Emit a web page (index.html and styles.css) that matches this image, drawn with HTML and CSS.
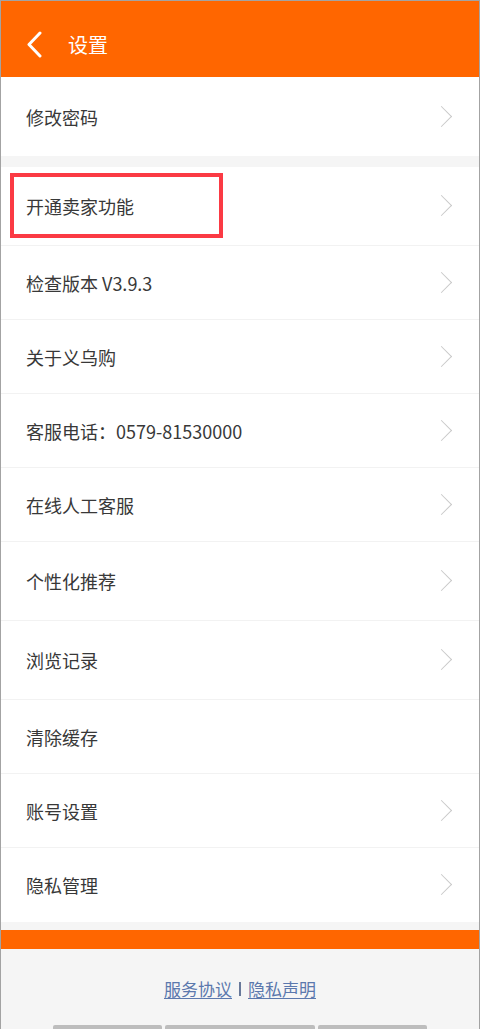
FILE: index.html
```html
<!DOCTYPE html>
<html lang="zh-CN">
<head>
  <meta charset="UTF-8">
  <title>设置</title>
  <link rel="stylesheet" href="styles.css">
</head>
<body>

<div class="screen">
  <div class="header">
    <svg class="back" width="16" height="27" viewBox="0 0 16 27">
      <path d="M14 2 L3 13.5 L14 25" fill="none" stroke="#fff" stroke-width="3" stroke-linecap="round" stroke-linejoin="round"/>
    </svg>
    <span class="title">设置</span>
  </div>

  <div class="group">
    <div class="row first">修改密码<span class="arrow"></span></div>
  </div>

  <div class="group">
    <div class="row tall highlight">开通卖家功能<span class="arrow"></span><span class="mark"></span></div>
    <div class="row">检查版本 V3.9.3<span class="arrow"></span></div>
    <div class="row">关于义乌购<span class="arrow"></span></div>
    <div class="row">客服电话：0579-81530000<span class="arrow"></span></div>
    <div class="row">在线人工客服<span class="arrow"></span></div>
    <div class="row tall">个性化推荐<span class="arrow"></span></div>
    <div class="row tall">浏览记录<span class="arrow"></span></div>
    <div class="row">清除缓存</div>
    <div class="row">账号设置<span class="arrow"></span></div>
    <div class="row last">隐私管理<span class="arrow"></span></div>
  </div>

  <div class="orange-bar"></div>

  <div class="footer">
    <div class="links">
      <a href="#">服务协议</a>
      <span class="sep"></span>
      <a href="#">隐私声明</a>
    </div>
    <div class="tabs">
      <span class="tab t1"></span>
      <span class="tab t2"></span>
      <span class="tab t3"></span>
    </div>
  </div>
</div>

</body>
</html>
```

FILE: styles.css
```css
html, body {
  margin: 0;
  padding: 0;
}

body {
  font-family: "Noto Sans CJK SC", "Noto Sans", sans-serif;
  background: #fff;
  color: #333;
}

.screen {
  width: 480px;
  height: 1029px;
  box-sizing: border-box;
  border: 1px solid #a3a3a3;
  border-bottom: none;
  background: #f5f5f5;
  display: flex;
  flex-direction: column;
  overflow: hidden;
}

.header {
  height: 76px;
  background: #ff6600;
  display: flex;
  align-items: center;
  padding-left: 25px;
  flex-shrink: 0;
}

.back {
  display: block;
  margin-top: 11px;
}

.title {
  color: #fff;
  font-size: 20px;
  margin-left: 26px;
  margin-top: 10px;
}

.group {
  background: #fff;
  margin-bottom: 11px;
}

.group + .group {
  margin-bottom: 8px;
}

.row {
  position: relative;
  height: 74px;
  box-sizing: border-box;
  border-bottom: 1px solid #f2f2f2;
  display: flex;
  align-items: center;
  padding-left: 25px;
  font-size: 18px;
  color: #383838;
}

.row.tall {
  height: 79px;
}

.row.first {
  height: 79px;
  border-bottom: none;
}

.row.last {
  border-bottom: none;
}

.arrow {
  position: absolute;
  right: 30px;
  top: 50%;
  width: 14px;
  height: 14px;
  margin-top: -8px;
  border-top: 1.5px solid #c9c9c9;
  border-right: 1.5px solid #c9c9c9;
  transform: rotate(45deg);
}

.mark {
  position: absolute;
  left: 9px;
  top: 6px;
  width: 205px;
  height: 57px;
  border: 4px solid #fb3a44;
}

.orange-bar {
  height: 19px;
  background: #ff6600;
  flex-shrink: 0;
}

.footer {
  flex: 1;
  display: flex;
  flex-direction: column;
  align-items: center;
}

.links {
  margin-top: 27px;
  display: flex;
  align-items: center;
  font-size: 17px;
}

.links a {
  color: #5b78ad;
  text-decoration: underline;
  text-underline-offset: 2px;
}

.sep {
  display: inline-block;
  width: 2px;
  height: 14px;
  background: #68799a;
  margin: 0 7px;
}

.tabs {
  margin-top: auto;
  display: flex;
  gap: 3px;
}

.tab {
  height: 4px;
  background: #bdbdbd;
  border-radius: 2px 2px 0 0;
}

.t1 { width: 109px; }
.t2 { width: 150px; }
.t3 { width: 109px; }
```
